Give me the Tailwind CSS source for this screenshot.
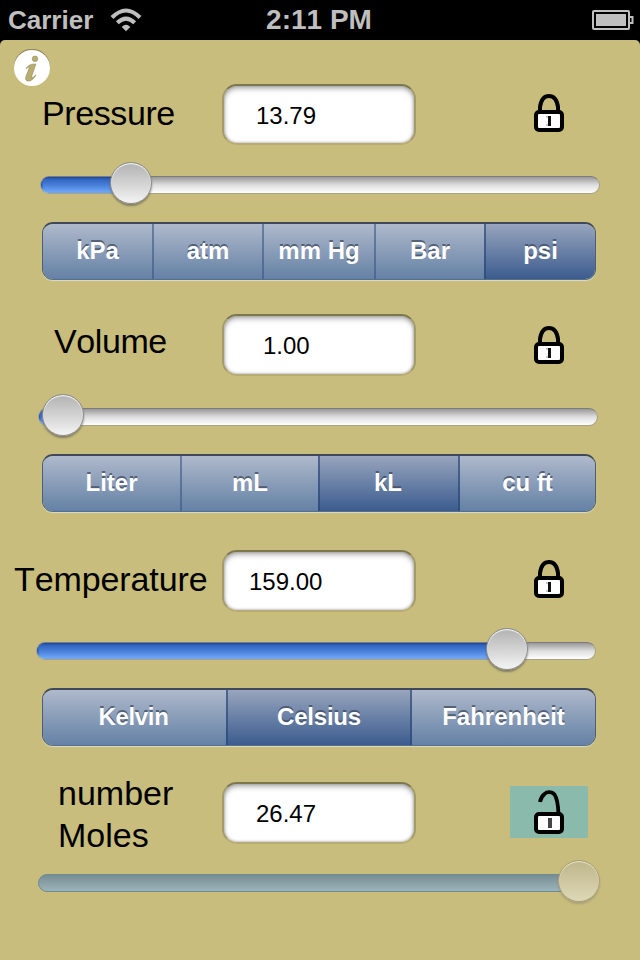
<!DOCTYPE html>
<html lang="en">
<head>
<meta charset="utf-8">
<title>Gas Law Calculator</title>
<script src="https://cdn.jsdelivr.net/npm/@tailwindcss/browser@4"></script>
</head>
<body class="w-[640px] h-[960px] overflow-hidden bg-black font-['Liberation_Sans',Arial,sans-serif] text-black [font-kerning:none]">
<svg class="absolute w-0 h-0" aria-hidden="true">
  <defs>
    <symbol id="lock" viewBox="0 0 30 38">
      <path d="M6 18V13C7 6 9.500 2 15 2S23 6 24 13V18" fill="none" stroke="#000" stroke-width="4"/>
      <rect x="2" y="18" width="26" height="18" rx="3" fill="#fff" stroke="#000" stroke-width="4"/>
      <path d="M14 22h3v10h-3z" fill="#111"/><path d="M12 22h2v2h-2zM12 30h2v2h-2z" fill="#ccc"/>
    </symbol>
    <symbol id="unlock" viewBox="0 0 30 44">
      <path d="M6 12C6.500 9 8 6 10.500 4C13 1.500 18 1.500 20.500 4.500C23 8 24 12 24.500 24" fill="none" stroke="#000" stroke-width="3.800"/>
      <rect x="2" y="24" width="26" height="18" rx="3" fill="#fff" stroke="#000" stroke-width="4"/>
      <path d="M14 28h4v10h-4z" fill="#444"/>
    </symbol>
  </defs>
</svg>

<header class="h-10 flex items-center justify-between pl-2 pr-1.5 text-[#bfbfbf] font-bold">
  <div class="flex items-center w-[226px] gap-[17px]">
    <span class="text-[26px] leading-10">Carrier</span>
    <svg class="w-8 h-6" viewBox="0 0 32 24" fill="none" stroke="#bfbfbf" stroke-width="4">
      <path d="M2 9.500Q16 -4.500 30 9.500"/><path d="M7.300 14.800Q16 6.300 24.700 14.800"/>
      <path d="M11.700 19Q16 14.500 20.300 19L16 23.300Z" fill="#bfbfbf" stroke="none"/>
    </svg>
  </div>
  <span class="text-[28px] leading-10 w-[170px] pr-1 text-center">2:11 PM</span>
  <div class="w-[226px] flex justify-end">
    <svg class="w-[42px] h-5" viewBox="0 0 42 20" fill="none" stroke="#bfbfbf">
      <rect x="1" y="1" width="36" height="18" rx="1" stroke-width="2"/><rect x="4" y="4" width="30" height="12" fill="#bfbfbf" stroke="none"/>
      <path d="M38 7h2.500v6H38" stroke-width="2"/>
    </svg>
  </div>
</header>

<main class="h-[920px] bg-[#c8bd7c] rounded-t-[5px] flex flex-col">
  <div class="h-11 pl-[13px] pt-[9px]">
    <svg class="w-[38px] h-[38px]" viewBox="0 0 38 38">
      <circle cx="19" cy="17.700" r="18" fill="#8f8758"/><circle cx="19" cy="19" r="18" fill="#fff"/>
      <circle cx="22" cy="9.800" r="2.800" fill="#b9ae70" stroke="#8f8758" stroke-width=".5"/>
      <path d="M13 19.500C15 16 19 14.800 22.800 15C21.500 19 19.500 25 18.200 29C19.500 29 21 27.500 22.800 26C21 30 17.500 32.500 14.500 32C12 31.500 12.500 28.500 13.500 26L16.500 18.500C15.500 18 14.500 19 13 19.500Z" fill="#b9ae70" stroke="#8f8758" stroke-width=".6"/>
    </svg>
  </div>

  <section class="h-[230px] flex flex-col">
    <div class="h-[62px] flex items-start">
      <h2 class="w-[222px] pl-[42px] pt-[9px] text-[34px] tracking-[-0.4px] leading-[40px] whitespace-nowrap">Pressure</h2>
      <div class="w-[194px] h-[61px] rounded-[15px] bg-white border-2 border-[#a39b68] border-t-[#7d774d] border-b-[#b7ad73] shadow-[inset_0_3px_5px_#8889,inset_0_0_3px_#999] pl-[32px] pt-[14px] text-2xl leading-[32px]">13.79</div>
      <div class="ml-[94px] mt-[2px] w-[78px] h-[52px] flex justify-center pt-2"><svg class="w-[30px] h-[38px]"><use href="#lock"/></svg></div>
    </div>
    <div class="relative mt-[16px] ml-[40px] w-[560px] h-11 flex items-center pt-[2px]">
      <div class="flex-1 h-[18px] rounded-full border border-[#a8a285] border-t-[#7c7c7c] bg-linear-to-b from-[#999] via-[#dedede] to-white overflow-hidden"><div class="h-full w-[90px] bg-linear-to-b from-[#2a5bb5] via-[#477fd7] to-[#74acff] shadow-[inset_1px_1px_2px_#1c479b]"></div></div>
      <div class="absolute left-[70px] top-0 size-[42px] rounded-full border border-[#8d8d8d] bg-linear-to-b from-[#b2b2b2] to-[#f4f4f4] shadow-[0_2px_2px_#5559,inset_0_1px_1px_#fff]"></div>
    </div>
    <div class="mt-[16px] ml-[42px] w-[554px] h-[58px] flex rounded-[11px] overflow-hidden border-t-2 border-t-[#40495a] border-x border-x-[#4b5d79] border-b border-b-[#526f96] shadow-[0_1px_1px_#eee9] text-white text-2xl font-bold text-center leading-[54px] [text-shadow:0_-2px_0_#3b475bbb]">
      <span class="w-[109px] bg-linear-to-b from-[#afb9cb] to-[#6481a5]">kPa</span>
      <span class="w-[110px] border-l-2 border-[#3a578599] bg-linear-to-b from-[#afb9cb] to-[#6481a5]">atm</span>
      <span class="w-[112px] border-l-2 border-[#3a578599] bg-linear-to-b from-[#afb9cb] to-[#6481a5]">mm Hg</span>
      <span class="w-[110px] border-l-2 border-[#3a578599] bg-linear-to-b from-[#afb9cb] to-[#6481a5]">Bar</span>
      <span class="w-[111px] border-l-2 border-[#284578aa] bg-linear-to-b from-[#98a5bd] to-[#3c5c8e]">psi</span>
    </div>
  </section>

  <section class="h-[236px] flex flex-col">
    <div class="h-[62px] flex items-start">
      <h2 class="w-[222px] pl-[54px] pt-[7px] text-[34px] tracking-[-0.4px] leading-[40px] whitespace-nowrap">Volume</h2>
      <div class="w-[194px] h-[62px] rounded-[15px] bg-white border-2 border-[#a39b68] border-t-[#7d774d] border-b-[#b7ad73] shadow-[inset_0_3px_5px_#8889,inset_0_0_3px_#999] pl-[39px] pt-[14px] text-2xl leading-[32px]">1.00</div>
      <div class="ml-[94px] mt-[4px] w-[78px] h-[52px] flex justify-center pt-2"><svg class="w-[30px] h-[38px]"><use href="#lock"/></svg></div>
    </div>
    <div class="relative mt-[18px] ml-[38px] w-[560px] h-11 flex items-center pt-[2px]">
      <div class="flex-1 h-[18px] rounded-full border border-[#a8a285] border-t-[#7c7c7c] bg-linear-to-b from-[#999] via-[#dedede] to-white overflow-hidden"><div class="h-full w-[24px] bg-linear-to-b from-[#2a5bb5] via-[#477fd7] to-[#74acff] shadow-[inset_1px_1px_2px_#1c479b]"></div></div>
      <div class="absolute left-[4px] top-0 size-[42px] rounded-full border border-[#8d8d8d] bg-linear-to-b from-[#b2b2b2] to-[#f4f4f4] shadow-[0_2px_2px_#5559,inset_0_1px_1px_#fff]"></div>
    </div>
    <div class="mt-[16px] ml-[42px] w-[554px] h-[58px] flex rounded-[11px] overflow-hidden border-t-2 border-t-[#40495a] border-x border-x-[#4b5d79] border-b border-b-[#526f96] shadow-[0_1px_1px_#eee9] text-white text-2xl font-bold text-center leading-[54px] [text-shadow:0_-2px_0_#3b475bbb]">
      <span class="w-[137px] bg-linear-to-b from-[#afb9cb] to-[#6481a5]">Liter</span>
      <span class="w-[138px] border-l-2 border-[#3a578599] bg-linear-to-b from-[#afb9cb] to-[#6481a5]">mL</span>
      <span class="w-[142px] border-x-2 border-[#284578aa] bg-linear-to-b from-[#98a5bd] to-[#3c5c8e] pr-0.5">kL</span>
      <span class="w-[135px] bg-linear-to-b from-[#afb9cb] to-[#6481a5]">cu ft</span>
    </div>
  </section>

  <section class="h-[232px] flex flex-col">
    <div class="h-[62px] flex items-start">
      <h2 class="w-[222px] pl-[14px] pt-[9px] text-[34px] tracking-[-0.1px] leading-[40px] whitespace-nowrap">Temperature</h2>
      <div class="w-[194px] h-[62px] rounded-[15px] bg-white border-2 border-[#a39b68] border-t-[#7d774d] border-b-[#b7ad73] shadow-[inset_0_3px_5px_#8889,inset_0_0_3px_#999] pl-[25px] pt-[14px] text-2xl leading-[32px]">159.00</div>
      <div class="ml-[94px] mt-[2px] w-[78px] h-[52px] flex justify-center pt-2"><svg class="w-[30px] h-[38px]"><use href="#lock"/></svg></div>
    </div>
    <div class="relative mt-[16px] ml-[36px] w-[560px] h-11 flex items-center pt-[2px]">
      <div class="flex-1 h-[18px] rounded-full border border-[#a8a285] border-t-[#7c7c7c] bg-linear-to-b from-[#999] via-[#dedede] to-white overflow-hidden"><div class="h-full w-[470px] bg-linear-to-b from-[#2a5bb5] via-[#477fd7] to-[#74acff] shadow-[inset_1px_1px_2px_#1c479b]"></div></div>
      <div class="absolute left-[450px] top-0 size-[42px] rounded-full border border-[#8d8d8d] bg-linear-to-b from-[#b2b2b2] to-[#f4f4f4] shadow-[0_2px_2px_#5559,inset_0_1px_1px_#fff]"></div>
    </div>
    <div class="mt-[16px] ml-[42px] w-[554px] h-[58px] flex rounded-[11px] overflow-hidden border-t-2 border-t-[#40495a] border-x border-x-[#4b5d79] border-b border-b-[#526f96] shadow-[0_1px_1px_#eee9] text-white text-2xl font-bold text-center leading-[54px] [text-shadow:0_-2px_0_#3b475bbb]">
      <span class="w-[183px] pr-0.5 tracking-[-0.3px] bg-linear-to-b from-[#afb9cb] to-[#6481a5]">Kelvin</span>
      <span class="w-[186px] tracking-[-0.2px] border-x-2 border-[#284578aa] bg-linear-to-b from-[#98a5bd] to-[#3c5c8e]">Celsius</span>
      <span class="w-[183px] bg-linear-to-b from-[#afb9cb] to-[#6481a5]">Fahrenheit</span>
    </div>
  </section>

  <section class="h-[178px] flex flex-col">
    <div class="h-[62px] flex items-start">
      <h2 class="w-[222px] pl-[58px] -mt-[10px] text-[34px] leading-[42px] whitespace-nowrap">number<br>Moles</h2>
      <div class="w-[194px] h-[62px] rounded-[15px] bg-white border-2 border-[#a39b68] border-t-[#7d774d] border-b-[#b7ad73] shadow-[inset_0_3px_5px_#8889,inset_0_0_3px_#999] pl-[32px] pt-[14px] text-2xl leading-[32px]">26.47</div>
      <div class="ml-[94px] mt-[4px] w-[78px] h-[52px] bg-[#8abaab] flex justify-center pt-1"><svg class="w-[30px] h-[44px]"><use href="#unlock"/></svg></div>
    </div>
    <div class="relative mt-[16px] ml-[38px] w-[560px] h-11 flex items-center pt-[2px]">
      <div class="flex-1 h-[18px] rounded-full border border-[#6f8b91] bg-linear-to-b from-[#768d95] to-[#9db4ba]"></div>
      <div class="absolute left-[520px] top-0 size-[42px] rounded-full border border-[#aaa277] bg-linear-to-b from-[#beb68b] to-[#dfd8b7] shadow-[0_2px_2px_#7776,inset_0_1px_1px_#eee8c8]"></div>
    </div>
  </section>
</main>
</body>
</html>
